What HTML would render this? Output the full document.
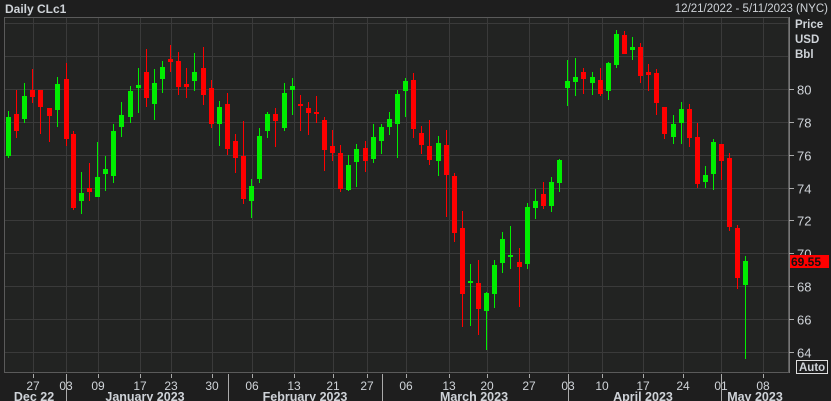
<!DOCTYPE html>
<html><head><meta charset="utf-8"><style>
html,body{margin:0;padding:0;background:#1e1e1e;width:831px;height:401px;overflow:hidden}
svg{display:block}
text{font-family:"Liberation Sans",sans-serif;fill:#cfd3d8}
</style></head><body>
<svg id="s" width="831" height="401" xmlns="http://www.w3.org/2000/svg">
<rect x="0" y="0" width="831" height="401" fill="#1e1e1e"/>
<rect x="4.5" y="17.5" width="784" height="355" fill="#222322" stroke="#5a5a5a"/>
<g id="grid" stroke="#3a3a3a" stroke-width="1"></g>
<g id="c"></g>
<line x1="789.5" y1="17" x2="789.5" y2="373" stroke="#777"/>
<text x="5" y="13" font-size="12" font-weight="bold" fill="#d8d8d8">Daily CLc1</text>
<text x="828" y="12" font-size="11.5" text-anchor="end">12/21/2022 - 5/11/2023 (NYC)</text>
<text x="795" y="28" font-size="11.5" font-weight="bold">Price</text>
<text x="795" y="43" font-size="11.5" font-weight="bold">USD</text>
<text x="795" y="58" font-size="11.5" font-weight="bold">Bbl</text>
<g id="ax"></g>
<rect x="790" y="255" width="39" height="13" fill="#ff0000"/>
<text x="791" y="266" font-size="12" font-weight="bold" style="fill:#111">69.55</text>
<rect x="796.5" y="360.5" width="31" height="13" fill="none" stroke="#ddd"/>
<text x="799" y="371" font-size="11.5" font-weight="bold" fill="#ddd">Auto</text>
<g id="dates"></g>
</svg>
<script>
var NS="http://www.w3.org/2000/svg";
function el(p,t,a,tx){var e=document.createElementNS(NS,t);for(var k in a)e.setAttribute(k,a[k]);if(tx)e.textContent=tx;document.getElementById(p).appendChild(e);}
var prices=[84,82,80,78,76,74,72,70,68,66,64];
prices.forEach(function(p){var y=Math.round(89+(80-p)*16.43)+0.5;
 if(y>18&&y<372)el("grid","line",{x1:5,y1:y,x2:788,y2:y});
 if(p<=80){el("ax","line",{x1:789,y1:y,x2:794,y2:y,stroke:"#aaa"});
 el("ax","text",{x:797,y:y+5,"font-size":13},String(p));}
});
var days=[[33,"27"],[66,"03"],[98,"09"],[140,"17"],[171,"23"],[212,"30"],[252,"06"],[294,"13"],[333,"21"],[367,"27"],[406,"06"],[449,"13"],[487,"20"],[529,"27"],[568,"03"],[602,"10"],[643,"17"],[683,"24"],[721,"01"],[763,"08"]];
days.forEach(function(d){var x=d[0]+0.5;el("grid","line",{x1:x,y1:18,x2:x,y2:372});
 el("dates","line",{x1:x,y1:374,x2:x,y2:378,stroke:"#aaa"});
 el("dates","text",{x:d[0],y:390,"font-size":12,"text-anchor":"middle"},d[1]);});
[66,228,382,568,721].forEach(function(x){el("dates","line",{x1:x+.5,y1:374,x2:x+.5,y2:401,stroke:"#aaa"});});
[[34,"Dec 22"],[145,"January 2023"],[305,"February 2023"],[474,"March 2023"],[643,"April 2023"],[755,"May 2023"]].forEach(function(m){
 el("dates","text",{x:m[0],y:401,"font-size":12.5,"font-weight":"bold","text-anchor":"middle"},m[1]);});
var C=[
[8,111,158,117,156,1],[16,90,138,114,131,0],[24,83,123,96,119,1],[32,69,103,90,97,0],[40,90,134,90,107,0],[49,108,142,108,116,0],[57,77,127,84,110,1],[66,63,146,79,139,0],
[73,131,210,134,208,0],[81,172,214,193,201,1],[89,163,201,188,192,0],[97,142,197,177,197,1],[105,156,191,169,174,1],[113,124,183,131,176,1],[121,102,137,115,127,1],[130,86,123,91,117,1],
[138,68,113,85,88,1],[146,49,107,72,98,0],[154,69,120,83,104,1],[162,61,93,67,79,1],[170,45,72,59,62,0],[178,52,95,61,87,0],[186,68,98,84,87,0],[194,53,91,72,81,1],[203,47,105,68,95,0],
[211,80,128,88,124,0],[219,101,146,107,124,1],[227,93,155,104,149,0],[235,134,173,141,158,0],[243,121,204,156,199,0],[251,179,218,186,201,1],[259,128,183,136,179,1],[267,112,138,114,131,1],[275,108,147,114,121,0],
[284,83,131,93,128,1],[292,78,115,86,90,1],[300,95,131,104,105,0],[308,102,135,108,113,0],[316,96,123,112,113,0],[324,117,171,120,150,0],[332,130,161,146,153,0],[340,145,192,153,189,0],[348,155,191,165,190,1],
[356,144,187,149,162,1],[365,141,172,148,161,0],[373,124,163,137,159,1],[381,124,154,127,141,1],[389,112,135,119,127,1],[397,90,158,94,124,1],[405,78,117,81,91,1],[413,73,138,80,129,0],[421,126,154,133,145,0],
[429,120,165,146,160,0],[438,136,176,143,161,1],[446,130,217,145,175,0],[454,173,242,176,233,0],[462,211,327,228,294,0],[470,264,326,281,283,1],[478,260,335,283,309,0],[486,292,350,293,311,1],[494,260,308,265,294,1],
[502,232,273,239,263,1],[510,226,269,255,256,1],[519,248,307,262,267,0],[527,203,269,207,264,1],[535,189,219,201,208,1],[543,182,209,194,206,0],[551,177,212,182,206,1],[559,159,192,160,183,1],
[567,60,106,81,88,1],[575,58,96,77,82,1],[583,68,94,72,79,0],[592,72,95,77,83,1],[600,68,96,80,94,0],[608,62,100,63,91,1],[616,30,68,34,65,1],[624,31,54,35,54,0],[632,37,60,47,50,1],
[640,43,83,47,76,0],[648,64,91,72,75,0],[656,69,115,73,103,0],[664,107,139,107,134,0],[673,115,144,124,137,1],[681,102,144,109,123,1],[689,104,147,109,138,0],[697,123,188,137,184,0],[705,166,188,175,182,1],
[713,139,190,142,174,1],[721,144,180,144,161,0],[729,153,231,158,227,0],[737,225,289,228,278,0],[745,256,359,261,285,1]];
C.forEach(function(c){var col=c[5]?"#00ee00":"#ff0000";
 el("c","rect",{x:c[0],y:c[1],width:1,height:c[2]-c[1],fill:col});
 el("c","rect",{x:c[0]-2,y:c[3],width:5,height:Math.max(2,c[4]-c[3]),fill:col});});
</script>
</body></html>
